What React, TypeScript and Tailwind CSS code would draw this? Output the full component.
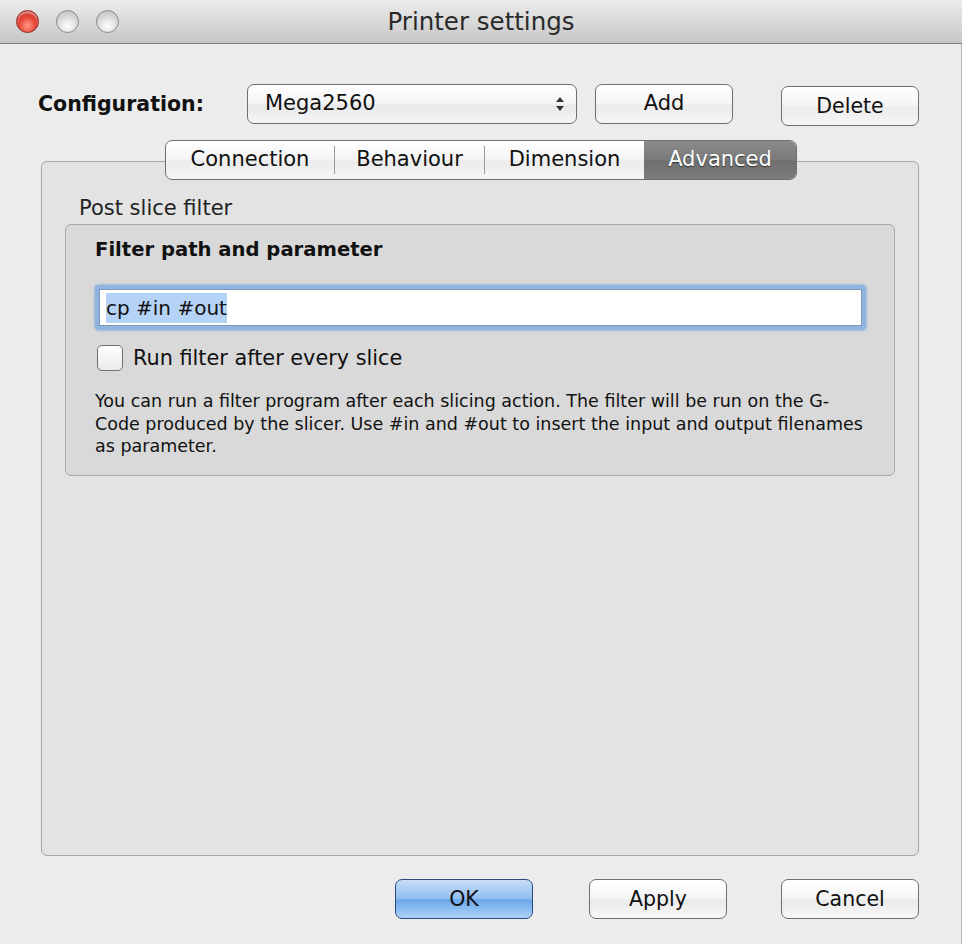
import { useState } from "react";

const font = "font-['DejaVu_Sans',_'Liberation_Sans',_sans-serif]";

function Light({ red }: { red?: boolean }) {
  return (
    <span
      className={
        red
          ? "size-[23px] rounded-full border border-[#8e2a22] bg-[radial-gradient(circle_at_50%_70%,#ff9a86_0%,#e8483a_45%,#b8261b_100%)] shadow-[inset_0_2px_2px_rgba(255,255,255,0.5)]"
          : "size-[23px] rounded-full border border-[#8a8a8a] bg-[radial-gradient(circle_at_50%_70%,#ffffff_0%,#dcdcdc_50%,#b4b4b4_100%)]"
      }
    />
  );
}

function Button({ label, primary, className = "" }: { label: string; primary?: boolean; className?: string }) {
  return (
    <button
      type="button"
      className={`h-[40px] w-[138px] rounded-[7px] border text-[20.5px] ${
        primary
          ? "border-[#2a4a80] bg-[linear-gradient(#c9def7,#8fbdf1_50%,#6aa6ea_52%,#aed2f7)] text-[#111]"
          : "border-[#6f6f6f] bg-[linear-gradient(#ffffff,#f4f4f4_50%,#ebebeb_52%,#f6f6f6)] text-[#111]"
      } ${className}`}
    >
      {label}
    </button>
  );
}

const tabs = ["Connection", "Behaviour", "Dimension", "Advanced"];
const tabWidths = ["w-[168px]", "w-[149px]", "w-[159px]", "w-[152px]"];

export default function App() {
  const [active, setActive] = useState(3);
  const [checked, setChecked] = useState(false);

  return (
    <div className={`${font} flex h-[944px] w-[962px] flex-col overflow-hidden bg-[#ececec] text-[#111]`}>
      {/* title bar */}
      <div className="relative flex h-[44px] shrink-0 items-center border-b border-[#7c7c7c] bg-[linear-gradient(#ececec,#d6d6d6_60%,#c6c6c6)] px-[16px]">
        <div className="flex gap-[17px]">
          <Light red />
          <Light />
          <Light />
        </div>
        <span className="absolute left-0 right-0 text-center text-[24.5px] leading-[30px] text-[#2a2a2a]">
          Printer settings
        </span>
      </div>

      <div className="flex flex-1 flex-col border-r border-[#b5b5b5] pl-[41px] pr-[42px] pt-[38px]">
        {/* configuration row */}
        <div className="flex items-center">
          <span className="ml-[-3px] w-[209px] text-[20.5px] font-bold">Configuration:</span>
          <div className="flex h-[40px] w-[330px] items-center justify-between rounded-[7px] border border-[#6f6f6f] bg-[linear-gradient(#ffffff,#f3f3f3_50%,#e9e9e9_52%,#f5f5f5)] pl-[17px] pr-[11px] text-[21px]">
            <span>Mega2560</span>
            <svg width="10" height="16" viewBox="0 0 10 16">
              <path d="M5 1 L9 6 H1 Z" fill="#333" />
              <path d="M5 15 L9 10 H1 Z" fill="#333" />
            </svg>
          </div>
          <Button label="Add" className="ml-[18px] text-[21px]" />
          <Button label="Delete" className="ml-[48px] mt-[4px]" />
        </div>

        {/* tabs */}
        <div className="relative z-10 mt-[14px] flex pl-[124px]">
          <div className="flex h-[40px] overflow-hidden rounded-[7px] border border-[#6f6f6f] bg-[linear-gradient(#ffffff,#f4f4f4_50%,#ebebeb_52%,#f6f6f6)]">
            {tabs.map((t, i) => (
              <div key={t} className="flex items-center">
                {i > 0 && i !== active && i - 1 !== active && <span className="h-[28px] w-px bg-[#9a9a9a]" />}
                <button
                  type="button"
                  onClick={() => setActive(i)}
                  className={`${tabWidths[i]} flex h-full items-center justify-center text-[21px] ${
                    i === active
                      ? "bg-[linear-gradient(#8a8a8a,#7a7a7a_50%,#6e6e6e_52%,#7c7c7c)] text-white [text-shadow:0_1px_1px_rgba(0,0,0,0.6)]"
                      : ""
                  }`}
                >
                  {t}
                </button>
              </div>
            ))}
          </div>
        </div>

        {/* tab pane */}
        <div className="mt-[-19px] flex h-[695px] flex-col rounded-[6px] border border-[#a6a6a6] bg-[#e3e3e3] px-[23px] pt-[32px]">
          <span className="ml-[14px] text-[21px] leading-[28px] text-[#222]">Post slice filter</span>
          <div className="mt-[2px] flex h-[252px] flex-col rounded-[6px] border border-[#a9a9a9] bg-[#d9d9d9] pl-[29px] pr-[28px] pt-[12px]">
            <span className="text-[19.6px] font-bold leading-[26px]">Filter path and parameter</span>
            <div className="mt-[22px] rounded-[4px] bg-[#8fb4df] p-[4px] shadow-[0_0_3px_#6d9bd3]">
              <div className="flex h-[37px] items-center border border-[#7d98b8] bg-white px-[6px]">
                <span className="bg-[#b5d3f7] text-[20px] text-[#111]">cp #in #out</span>
              </div>
            </div>
            <label className="mt-[14px] flex h-[28px] items-center gap-[10px]">
              <input
                type="checkbox"
                checked={checked}
                onChange={(e) => setChecked(e.target.checked)}
                className="ml-[2px] size-[26px] appearance-none rounded-[5px] border border-[#6f6f6f] bg-[linear-gradient(#fdfdfd,#ececec)] checked:bg-[#6aa6ea]"
              />
              <span className="text-[20.8px] leading-[28px]">Run filter after every slice</span>
            </label>
            <p className="mt-[18px] whitespace-nowrap text-[17.5px] leading-[22.5px] text-[#111]">
              You can run a filter program after each slicing action. The filter will be run on the G-
              <br />
              Code produced by the slicer. Use #in and #out to insert the input and output filenames
              <br />
              as parameter.
            </p>
          </div>
        </div>

        {/* bottom buttons */}
        <div className="mt-[23px] flex justify-end">
          <Button label="OK" primary />
          <Button label="Apply" className="ml-[56px]" />
          <Button label="Cancel" className="ml-[54px]" />
        </div>
      </div>
    </div>
  );
}
